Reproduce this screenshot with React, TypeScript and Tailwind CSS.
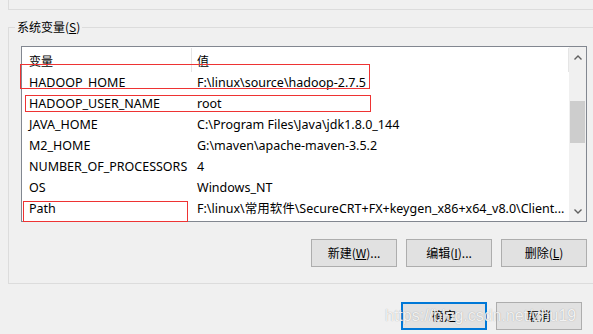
const rows = [
  { name: "HADOOP_HOME", value: "F:\\linux\\source\\hadoop-2.7.5" },
  { name: "HADOOP_USER_NAME", value: "root" },
  { name: "JAVA_HOME", value: "C:\\Program Files\\Java\\jdk1.8.0_144" },
  { name: "M2_HOME", value: "G:\\maven\\apache-maven-3.5.2" },
  { name: "NUMBER_OF_PROCESSORS", value: "4" },
  { name: "OS", value: "Windows_NT" },
  {
    name: "Path",
    value: "F:\\linux\\常用软件\\SecureCRT+FX+keygen_x86+x64_v8.0\\Client...",
  },
];

function Chevron({ down }: { down?: boolean }) {
  return (
    <svg width="8" height="5" viewBox="0 0 8 5">
      <path
        d={down ? "M0.5 0.5 L4 4 L7.5 0.5" : "M0.5 4.5 L4 1 L7.5 4.5"}
        fill="none"
        stroke="#606060"
        strokeWidth="1.4"
      />
    </svg>
  );
}

function WinButton({
  children,
  isDefault,
}: {
  children: React.ReactNode;
  isDefault?: boolean;
}) {
  return (
    <button
      className={
        isDefault
          ? "w-[86px] h-[28px] bg-[#e1e1e1] border-2 border-[#0078d7] text-[12px] text-black flex items-center justify-center"
          : "w-[86px] h-[28px] bg-[#e1e1e1] border border-[#adadad] text-[12px] text-black flex items-center justify-center"
      }
    >
      {children}
    </button>
  );
}

function App() {
  return (
    <div className="relative w-[593px] h-[334px] overflow-hidden bg-[#f0f0f0] font-['Noto_Sans','Noto_Sans_CJK_SC',sans-serif] text-black">
      {/* tail of the group box above */}
      <div className="h-[10px] ml-[8px] border-l border-b border-[#dcdcdc]" />

      <fieldset className="mt-[9px] ml-[8px] w-[600px] border border-[#dcdcdc] pb-[16px]">
        <legend className="ml-[6px] px-[2px] text-[12px] leading-[16px] font-['Noto_Sans_CJK_SC',sans-serif]">
          系统变量(<u>S</u>)
        </legend>

        <div className="mt-[11px] ml-[12px] w-[566px] h-[176px] border border-[#828790] bg-white flex">
          <div className="flex-1 flex flex-col">
            <div className="h-[25px] flex text-[12px]">
              <div className="w-[170px] pl-[7px] pt-[4px] border-r border-[#e5e5e5] mt-[1px] font-['Noto_Sans_CJK_SC',sans-serif]">
                变量
              </div>
              <div className="flex-1 pl-[5px] pt-[4px] border-r border-[#e5e5e5] mt-[1px] font-['Noto_Sans_CJK_SC',sans-serif]">
                值
              </div>
            </div>
            {rows.map((r) => (
              <div key={r.name} className="h-[21px] pt-[2px] flex items-center text-[12.5px] whitespace-nowrap">
                <div className="w-[170px] pl-[7px] overflow-hidden">{r.name}</div>
                <div className="flex-1 pl-[5px] overflow-hidden">{r.value}</div>
              </div>
            ))}
          </div>

          {/* scrollbar */}
          <div className="w-[17px] bg-[#f0f0f0] flex flex-col">
            <div className="h-[21px] flex items-center justify-center">
              <Chevron />
            </div>
            <div className="flex-1 px-[1px]">
              <div className="mt-[33px] h-[42px] bg-[#cdcdcd]" />
            </div>
            <div className="h-[19px] flex items-center justify-center">
              <Chevron down />
            </div>
          </div>
        </div>

        <div className="mt-[17px] ml-[12px] w-[566px] flex justify-end gap-[9px] font-['Noto_Sans_CJK_SC',sans-serif]">
          <WinButton>
            新建(<u>W</u>)...
          </WinButton>
          <WinButton>
            编辑(<u>I</u>)...
          </WinButton>
          <WinButton>
            删除(<u>L</u>)
          </WinButton>
        </div>
      </fieldset>

      <div className="mt-[18px] pr-[11px] flex justify-end gap-[9px] font-['Noto_Sans_CJK_SC',sans-serif]">
        <WinButton isDefault>确定</WinButton>
        <WinButton>取消</WinButton>
      </div>

      {/* red annotation boxes */}
      <div className="absolute left-[20px] top-[64px] w-[350px] h-[25px] border border-[#ee3333]" />
      <div className="absolute left-[25px] top-[95px] w-[346px] h-[17px] border border-[#ee3333]" />
      <div className="absolute left-[23px] top-[201px] w-[165px] h-[21px] border border-[#ee3333]" />

      {/* watermark */}
      <div className="absolute left-[385px] top-[308px] text-[16px] leading-[16px] whitespace-nowrap font-['Liberation_Sans',sans-serif] text-white/85 [text-shadow:0_0_1px_rgba(0,0,0,0.35)]">
        https://blog.csdn.net/zhu19
      </div>
    </div>
  );
}

export default App;
